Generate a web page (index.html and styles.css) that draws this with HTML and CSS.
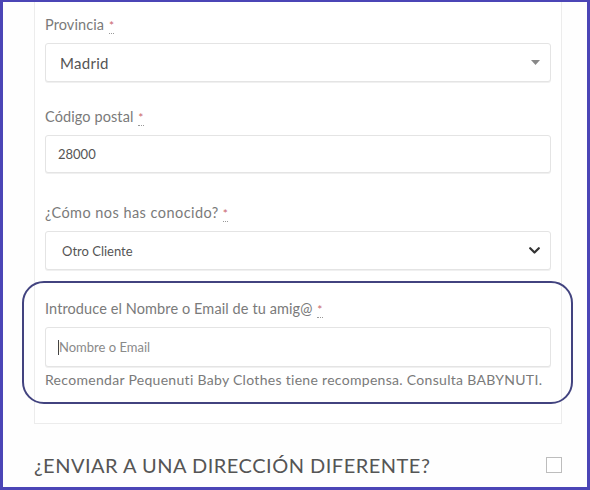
FILE: index.html
```html
<!DOCTYPE html>
<html lang="es">
<head>
<meta charset="utf-8">
<title>Checkout</title>
<link rel="stylesheet" href="styles.css">
</head>
<body>
<div class="frame">
  <div class="card">
    <div class="field field-1">
      <label class="label">Provincia <abbr class="req" title="obligatorio">*</abbr></label>
      <div class="control select2">
        <span class="value value-lg">Madrid</span>
        <svg class="tri" width="9" height="5" viewBox="0 0 9 5"><path d="M0 0 L9 0 L4.5 5 Z" fill="#888"/></svg>
      </div>
    </div>
    <div class="field field-2">
      <label class="label">Código postal <abbr class="req" title="obligatorio">*</abbr></label>
      <div class="control">
        <span class="value value-sm">28000</span>
      </div>
    </div>
    <div class="field field-3">
      <label class="label">¿Cómo nos has conocido?<abbr class="req req-tight" title="obligatorio">*</abbr></label>
      <div class="control">
        <span class="value value-sm value-otro">Otro Cliente</span>
        <svg class="chev" width="11" height="7" viewBox="0 0 11 7"><path d="M1.2 1.2 L5.5 5.5 L9.8 1.2" fill="none" stroke="#333" stroke-width="2.2" stroke-linecap="round" stroke-linejoin="round"/></svg>
      </div>
    </div>
    <div class="refer">
      <label class="label">Introduce el Nombre o Email de tu amig@ <abbr class="req" title="obligatorio">*</abbr></label>
      <div class="control control-focus">
        <span class="caret"></span><span class="placeholder">Nombre o Email</span>
      </div>
      <p class="help">Recomendar Pequenuti Baby Clothes tiene recompensa. Consulta BABYNUTI.</p>
    </div>
  </div>
  <div class="ship">
    <h3 class="ship-title">¿ENVIAR A UNA DIRECCIÓN DIFERENTE?</h3>
    <span class="checkbox"></span>
  </div>
</div>
</body>
</html>
```
FILE: styles.css
```css
* { box-sizing: border-box; }
html, body { margin: 0; padding: 0; background: #fff; }
body { font-family: "Lato", "Open Sans", sans-serif; color: #777; }

.frame {
  width: 590px;
  height: 490px;
  border-style: solid;
  border-color: #4b45b6;
  border-width: 2px 3px 3px 3px;
  overflow: hidden;
  background: #fefefe;
}

.card {
  margin-left: 31px;
  width: 528px;
  border: 1px solid #ececec;
  border-top: none;
  background: #fff;
  padding: 13px 10px 19px 10px;
}

.field { display: flex; flex-direction: column; }
.field-1 { margin-bottom: 25px; }
.field-2 { margin-bottom: 30px; }
.field-3 { margin-bottom: 11px; }

.label {
  display: block;
  font-size: 14.5px;
  line-height: 20px;
  color: #7a7a7a;
  margin-bottom: 8px;
  letter-spacing: 0.1px;
}
.field-3 .label { letter-spacing: 0.45px; }

.req {
  color: #c9636b;
  text-decoration: none;
  border-bottom: 1px dotted #999;
  font-size: 12px;
  margin-left: 1px;
  line-height: 1;
}
.req-tight { margin-left: 4px; }

.control {
  height: 39px;
  border: 1px solid #e4e4e4;
  border-radius: 3px;
  background: #fff;
  display: flex;
  align-items: center;
  padding: 0 13px 0 12px;
  box-shadow: 0 1px 0 #f0f0f0;
}
.field-2 .control { height: 38px; }

.value { color: #555; flex: 1; }
.value-lg { font-size: 15px; padding-left: 2px; letter-spacing: 0.3px; }
.value-sm { font-size: 13px; }
.value-otro { padding-left: 4px; }

.tri { margin-right: -3px; }
.chev { margin-right: -3px; }

.refer {
  margin: 0 -22px 0 -23px;
  border: 2px solid #42437f;
  border-radius: 22px;
  padding: 16px 20px 12px 21px;
}
.control-focus { height: 40px; padding-left: 12px; }
.caret {
  width: 1px;
  height: 15px;
  background: #444;
}
.placeholder { font-size: 13px; color: #8a8a8a; }

.help {
  margin: 3px 0 0 0;
  font-size: 14px;
  line-height: 20px;
  color: #7a7a7a;
  letter-spacing: 0.3px;
}

.ship {
  display: flex;
  align-items: center;
  justify-content: space-between;
  margin: 27px 0 0 31px;
  width: 528px;
}
.ship-title {
  margin: 0;
  font-weight: 400;
  font-size: 20px;
  line-height: 28px;
  letter-spacing: 0.5px;
  color: #555;
}
.checkbox {
  width: 16px;
  height: 16px;
  border: 1px solid #bdbdbd;
  background: #fff;
}
```
